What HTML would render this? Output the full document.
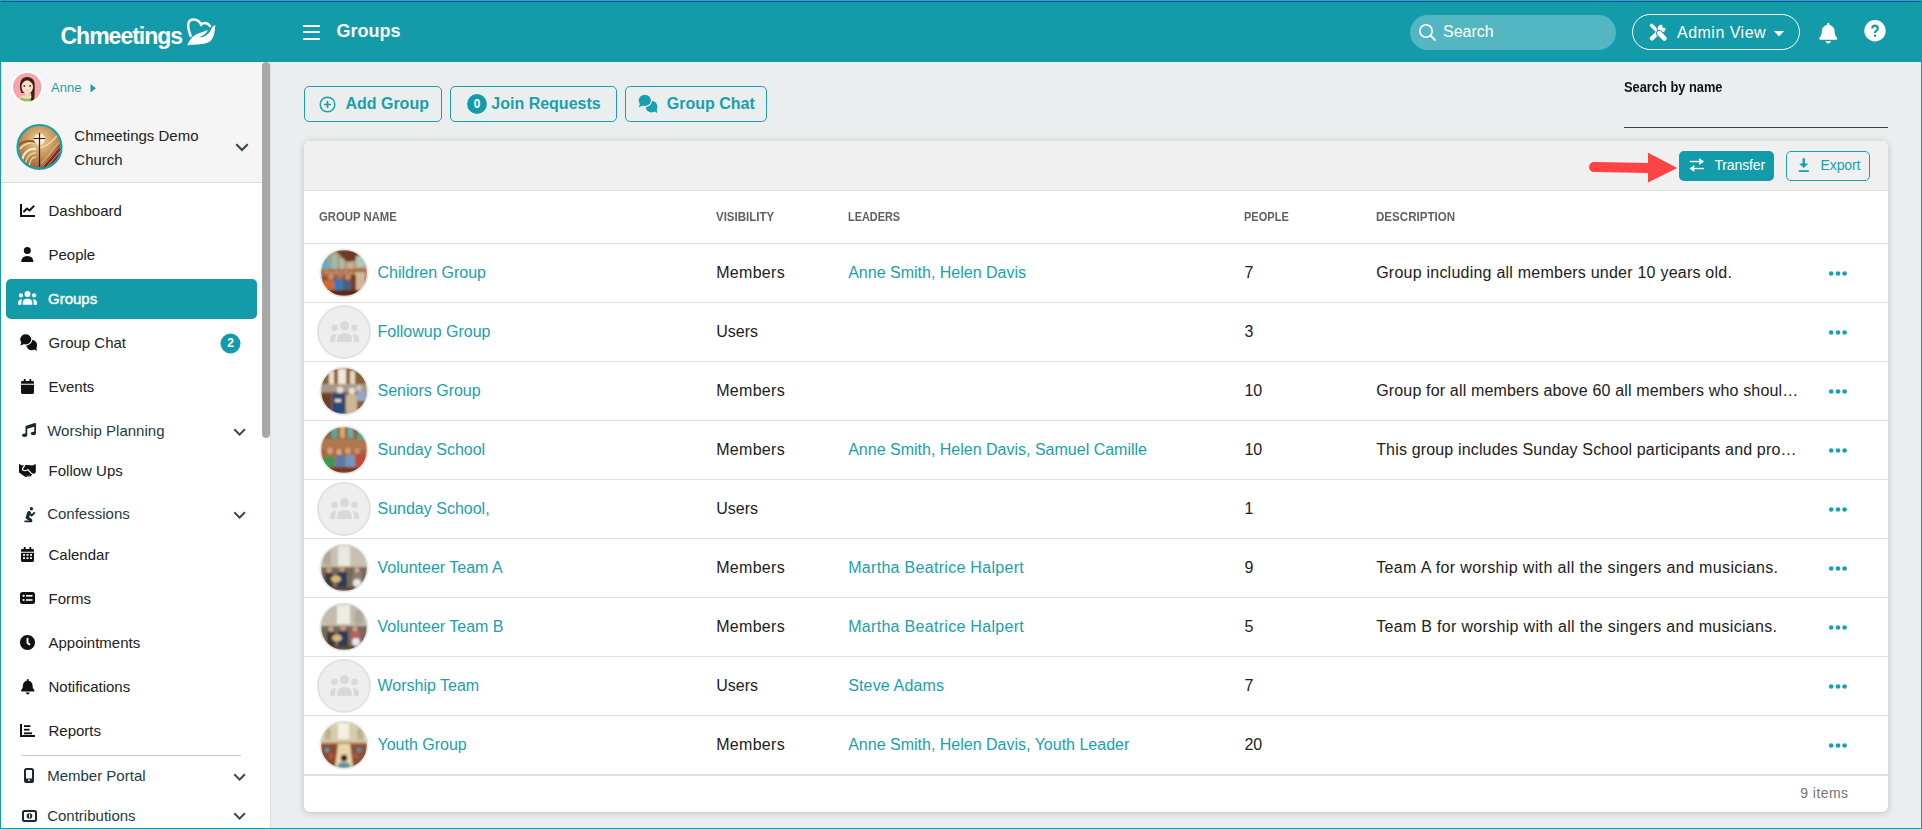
<!DOCTYPE html>
<html><head><meta charset="utf-8">
<style>
*{box-sizing:border-box;margin:0;padding:0}
html,body{width:1922px;height:829px;overflow:hidden}
body{position:relative;background:#149ba9;font-family:"Liberation Sans",sans-serif}
.abs{position:absolute}
.t{position:absolute;white-space:nowrap;line-height:1}
svg{overflow:visible}
</style></head><body>
<div class="abs" style="left:0px;top:0px;width:1922px;height:1px;background:#2aa9b4"></div>
<div class="abs" style="left:1px;top:1px;width:1920px;height:1px;background:#1651a0"></div>
<div class="abs" style="left:1px;top:2px;width:1920px;height:60px;background:#149ba9"></div>
<div class="t" style="left:60.5px;top:25.00px;font-size:23px;color:#fff;font-weight:bold;letter-spacing:-1px">Chmeetings</div>
<svg class="abs" style="left:185px;top:15px;" width="35" height="33" viewBox="0 0 35 33"><path d="M5.6 20.8 C3.6 15.5 2.6 10.5 3.6 7.6 C5.2 3.6 12.2 2.7 16.2 9.6 C18.2 7.6 23 7.2 25 11.2" fill="none" stroke="#fff" stroke-width="2.5" stroke-linecap="round"/><path d="M2.3 30.5 C4 26 7 21 12 19 C15.5 17.5 19.5 16.5 22.8 15 C21.5 18.5 18 21 14 22.3 C18 22.5 23 20.5 25.5 15.5 C27 12.5 28 10.5 30.3 10 C30 16 29 22 26 25.5 C22.5 29 16 29.3 11 29.6 C7.5 29.8 4.5 30 2.3 30.5 Z" fill="#fff"/></svg>
<div class="abs" style="left:303px;top:24.5px;width:17px;height:2.2px;background:#fff;border-radius:1px"></div>
<div class="abs" style="left:303px;top:31px;width:17px;height:2.2px;background:#fff;border-radius:1px"></div>
<div class="abs" style="left:303px;top:37.7px;width:17px;height:2.2px;background:#fff;border-radius:1px"></div>
<div class="t" style="left:336.5px;top:22.00px;font-size:18px;color:#fff;font-weight:bold;">Groups</div>
<div class="abs" style="left:1410px;top:15px;width:206px;height:35px;background:rgba(255,255,255,0.27);border-radius:18px"></div>
<svg class="abs" style="left:1418px;top:23px;" width="19" height="19" viewBox="0 0 19 19"><circle cx="8" cy="8" r="6.2" fill="none" stroke="#fff" stroke-width="1.6"/><line x1="12.5" y1="12.5" x2="17" y2="17" stroke="#fff" stroke-width="1.8" stroke-linecap="round"/></svg>
<div class="t" style="left:1443px;top:24.00px;font-size:16px;color:#fff;font-weight:normal;">Search</div>
<div class="abs" style="left:1632px;top:14px;width:168px;height:36px;border:1px solid #fff;border-radius:18px"></div>
<svg class="abs" style="left:1644px;top:18px;" width="28" height="28" viewBox="0 0 28 28"><line x1="7.5" y1="7.3" x2="13.5" y2="13.3" stroke="#fff" stroke-width="3.4" stroke-linecap="round"/><line x1="7.8" y1="20.6" x2="12.5" y2="15.9" stroke="#fff" stroke-width="4.2" stroke-linecap="round"/><circle cx="17.6" cy="10.6" r="4.4" fill="#fff" stroke="#149ba9" stroke-width="1"/><circle cx="20.3" cy="7.9" r="2.1" fill="#149ba9"/><path d="M19.5 5.5 L24 3.5 L24.5 9.5 Z" fill="#149ba9"/><line x1="15.3" y1="15.3" x2="20.4" y2="20.4" stroke="#149ba9" stroke-width="6.6" stroke-linecap="round"/><line x1="15.3" y1="15.3" x2="20.4" y2="20.4" stroke="#fff" stroke-width="4.8" stroke-linecap="round"/></svg>
<div class="t" style="left:1677px;top:25.00px;font-size:16px;color:#fff;font-weight:normal;letter-spacing:0.49px">Admin View</div>
<svg class="abs" style="left:1774px;top:31px;" width="10" height="6" viewBox="0 0 10 6"><path d="M0 0 L10 0 L5 5.5 Z" fill="#fff"/></svg>
<svg class="abs" style="left:1818.5px;top:23px;overflow:visible" width="18.5" height="20.5" viewBox="0 0 448 512"><path fill="#fff" d="M224 512c35.32 0 63.97-28.65 63.97-64H160.03c0 35.35 28.65 64 63.97 64zm215.39-149.71c-19.32-20.76-55.47-51.99-55.47-154.29 0-77.7-54.48-139.9-127.94-155.16V32c0-17.67-14.32-32-31.98-32s-31.98 14.330-31.98 32v20.84C118.56 68.1 64.08 130.3 64.08 208c0 102.3-36.15 133.53-55.47 154.29-6 6.45-8.66 14.16-8.61 21.71.11 16.4 12.98 32 32.1 32h383.8c19.12 0 32-15.6 32.1-32 .05-7.55-2.610-15.27-8.61-21.71z"/></svg>
<svg class="abs" style="left:1863.5px;top:20px;" width="22" height="22" viewBox="0 0 22 22"><circle cx="11" cy="10.8" r="10.7" fill="#fff"/><path d="M8.3 8.6 Q8.3 5.6 11 5.6 Q13.8 5.6 13.8 8.3 Q13.8 9.9 12.2 10.9 Q11 11.7 11 13" fill="none" stroke="#149ba9" stroke-width="2.2"/><rect x="9.9" y="14.6" width="2.2" height="2.2" fill="#149ba9"/></svg>
<div class="abs" style="left:1px;top:62px;width:269px;height:766px;background:#fff"></div>
<div class="abs" style="left:270px;top:62px;width:1px;height:766px;background:#dcdfe1"></div>
<div class="abs" style="left:271px;top:62px;width:1650px;height:766px;background:#eaeeef"></div>
<div class="abs" style="left:1px;top:62px;width:261px;height:120px;background:#f5f5f5"></div>
<div class="abs" style="left:1px;top:182px;width:261px;height:1px;background:#dadada"></div>
<div class="abs" style="left:262px;top:62px;width:8px;height:376px;background:#a8a8a8;border-radius:4px"></div>
<svg class="abs" style="left:8px;top:68px;" width="40" height="40" viewBox="0 0 40 40"><circle cx="19.2" cy="19.1" r="16.4" fill="#fff"/><circle cx="19.2" cy="19.1" r="14.2" fill="#f7a2ae"/><clipPath id="ca"><circle cx="19.2" cy="19.1" r="14.2"/></clipPath><g clip-path="url(#ca)"><path d="M8 36 Q9 28 19 27 Q29 28 30 36 Z" fill="#f8dcc4"/><path d="M9 36 Q10.5 30 14 29.5 Q19 32 24.5 29.5 Q28 30 29 36 Z" fill="#8cc455"/><path d="M12 21 Q11 9 19.3 9 Q27.5 9 26.8 20 L26.5 26 Q27 31 24.5 34 L22.5 33 Q24 28 23 25 L13.5 25 Z" fill="#3b2313"/><rect x="17" y="23" width="4.6" height="6" fill="#f5d4bb"/><ellipse cx="19.3" cy="18.8" rx="5.8" ry="7" fill="#f9dfc8"/><path d="M13.2 17 Q13.5 10.5 19.3 10.5 Q25 10.5 25.3 17 Q22 12.5 19.3 12.2 Q16 12.5 13.2 17 Z" fill="#3b2313"/><circle cx="16.3" cy="17.9" r="0.95" fill="#3a2a20"/><circle cx="22.2" cy="17.9" r="0.95" fill="#3a2a20"/><ellipse cx="19.3" cy="22.4" rx="0.8" ry="0.4" fill="#e09080"/></g></svg>
<div class="t" style="left:51px;top:81.00px;font-size:13px;color:#1a9fad;font-weight:normal;">Anne</div>
<svg class="abs" style="left:89.5px;top:83.5px;" width="7" height="9" viewBox="0 0 7 9"><path d="M0.5 0 L6 4.2 L0.5 8.5 Z" fill="#1a9fad"/></svg>
<svg class="abs" style="left:14px;top:122px;" width="52" height="52" viewBox="0 0 52 52"><defs><radialGradient id="cg" cx="0.5" cy="0.35" r="0.65"><stop offset="0" stop-color="#ecd3a0"/><stop offset="0.55" stop-color="#c89458"/><stop offset="1" stop-color="#9a6634"/></radialGradient><clipPath id="cc"><circle cx="25.5" cy="25" r="21"/></clipPath></defs><circle cx="25.5" cy="25" r="21.5" fill="url(#cg)"/><g clip-path="url(#cc)"><path d="M6 27 Q14 17 27 23" fill="none" stroke="#f2dfb4" stroke-width="1.6"/><path d="M7 48 Q7 26 22 27" fill="none" stroke="#f4e6c6" stroke-width="2.2"/><path d="M11 48 Q11 31 22 31" fill="none" stroke="#e8d0a0" stroke-width="1.6"/><path d="M15 48 Q15 35 22 35" fill="none" stroke="#f4e6c6" stroke-width="1.2"/><path d="M26 47 L47 21 L50 50 Z" fill="#7e2c20"/><path d="M27 42 L45 20 M28 45.5 L47 23 M31 47 L48 27 M34 48 L49 31" stroke="#e8c8a0" stroke-width="0.7"/><path d="M4 24 Q12 16 24 21" fill="none" stroke="#8a5a2e" stroke-width="2"/><path d="M26 26 Q38 22 44 12" fill="none" stroke="#f0dcb0" stroke-width="1.4"/></g><circle cx="25.5" cy="17" r="5.6" fill="#f6ebd2"/><line x1="25.5" y1="10.8" x2="25.5" y2="45" stroke="#2a1a10" stroke-width="1.2"/><line x1="19.8" y1="16.5" x2="31.2" y2="16.5" stroke="#2a1a10" stroke-width="1"/><circle cx="25.5" cy="25" r="22" fill="none" stroke="#1a9fad" stroke-width="2.2"/></svg>
<div class="t" style="left:74.3px;top:128.00px;font-size:15px;color:#212121;font-weight:normal;">Chmeetings Demo</div>
<div class="t" style="left:74.3px;top:152.00px;font-size:15px;color:#212121;font-weight:normal;">Church</div>
<svg class="abs" style="left:235px;top:143px;" width="14" height="9" viewBox="0 0 14 9"><path d="M1.3 1.3 L7 7 L12.7 1.3" fill="none" stroke="#37474f" stroke-width="2.2"/></svg>
<div class="abs" style="left:6px;top:279px;width:251px;height:40px;background:#149ba9;border-radius:5px"></div>
<div class="t" style="left:48.5px;top:203.00px;font-size:15px;color:#212121;font-weight:normal;">Dashboard</div>
<svg class="abs" style="left:20px;top:204px;" width="15" height="13" viewBox="0 0 15 13"><path d="M1 0 V12 H15" fill="none" stroke="#111" stroke-width="2"/><path d="M4 7.5 L7 4.5 L9.5 6.5 L13.8 2.2" fill="none" stroke="#111" stroke-width="1.9" stroke-linecap="round" stroke-linejoin="round"/></svg>
<div class="t" style="left:48.5px;top:247.00px;font-size:15px;color:#212121;font-weight:normal;">People</div>
<svg class="abs" style="left:20px;top:246px;" width="15" height="17" viewBox="0 0 15 17"><circle cx="7.3" cy="4.4" r="3.5" fill="#111"/><path d="M1.2 15.9 Q1.2 9.9 7.3 9.9 Q13.4 9.9 13.4 15.9 Z" fill="#111"/></svg>
<div class="t" style="left:48px;top:291.00px;font-size:15px;color:#fff;font-weight:normal;-webkit-text-stroke:0.45px #fff">Groups</div>
<svg class="abs" style="left:18px;top:290.6px;" width="18.995" height="13.755" viewBox="0 0 18.995 13.755"><g transform="scale(0.655)" fill="#fff"><circle cx="14.5" cy="4.7" r="4.6"/><circle cx="4.5" cy="6.7" r="3.2"/><circle cx="24.5" cy="6.7" r="3.2"/><path d="M7.2 21 V18 Q7.2 12 14.5 12 Q21.8 12 21.8 18 V21 Z"/><path d="M0 21 V18.5 Q0 13 6.3 12.7 Q5.2 14.8 5.2 18 V21 Z"/><path d="M29 21 V18.5 Q29 13 22.7 12.7 Q23.8 14.8 23.8 18 V21 Z"/></g></svg>
<div class="t" style="left:48.5px;top:335.00px;font-size:15px;color:#212121;font-weight:normal;">Group Chat</div>
<svg class="abs" style="left:15.5px;top:329.5px;" width="25.2" height="25.2" viewBox="0 0 25.2 25.2"><g transform="scale(0.9)"><circle cx="17.5" cy="16.6" r="5.9" fill="#111"/><path d="M19.5 20.5 L23.2 23.3 L22.6 17.8 Z" fill="#111"/><ellipse cx="10.8" cy="10.4" rx="7.3" ry="6.8" fill="#fff"/><ellipse cx="10.8" cy="10.4" rx="6.1" ry="5.6" fill="#111"/><path d="M6.2 13.2 L4.7 17.3 L9.2 15.5 Z" fill="#111"/></g></svg>
<svg class="abs" style="left:220px;top:332.5px;" width="21" height="21" viewBox="0 0 21 21"><circle cx="10.5" cy="10.5" r="10" fill="#149ba9"/><text x="10.5" y="13.5" text-anchor="middle" font-family="Liberation Sans" font-weight="bold" font-size="12" fill="#fff">2</text></svg>
<div class="t" style="left:48.5px;top:379.00px;font-size:15px;color:#212121;font-weight:normal;">Events</div>
<svg class="abs" style="left:21px;top:378.5px;" width="13" height="15" viewBox="0 0 448 512"><path fill="#111" d="M12 192h424c6.6 0 12 5.4 12 12v260c0 26.5-21.5 48-48 48H48c-26.5 0-48-21.5-48-48V204c0-6.6 5.4-12 12-12zm436-44v-36c0-26.5-21.5-48-48-48h-48V12c0-6.6-5.4-12-12-12h-40c-6.6 0-12 5.4-12 12v52H160V12c0-6.6-5.4-12-12-12h-40c-6.6 0-12 5.4-12 12v52H48C21.5 64 0 85.5 0 112v36c0 6.6 5.4 12 12 12h424c6.6 0 12-5.4 12-12z"/></svg>
<div class="t" style="left:47.2px;top:423.00px;font-size:15px;color:#1e3b44;font-weight:normal;">Worship Planning</div>
<svg class="abs" style="left:22px;top:423px;" width="14" height="14" viewBox="0 0 512 512"><path fill="#162a30" d="M470.38 1.51L150.41 96A32 32 0 0 0 128 126.51v261.41A139 139 0 0 0 96 384c-53 0-96 28.66-96 64s43 64 96 64 96-28.66 96-64V214.32l256-75v184.61a138.4 138.4 0 0 0-32-3.93c-53 0-96 28.66-96 64s43 64 96 64 96-28.65 96-64V32a32 32 0 0 0-41.62-30.49z"/></svg>
<svg class="abs" style="left:232.5px;top:427.5px;" width="14" height="9" viewBox="0 0 14 9"><path d="M1.3 1.3 L6.6 6.6 L11.9 1.3" fill="none" stroke="#37474f" stroke-width="2"/></svg>
<div class="t" style="left:48.6px;top:463.00px;font-size:15px;color:#212121;font-weight:normal;">Follow Ups</div>
<svg class="abs" style="left:16px;top:460px;" width="24" height="20" viewBox="0 0 24 20"><path fill="#111" d="M3 4 L6.5 5.6 L9 5 L12.5 5 L16.5 5.6 L19.8 4 L19.8 12.6 L17.6 13.9 L15.8 13 L16 14.8 L14.5 16.6 L9.5 16.9 L3 12.6 Z"/><path d="M8.8 5.2 L6.6 8.6 Q6.2 10 8 10.5 Q10 11 11.8 9.6 L15.6 13.6" fill="none" stroke="#fff" stroke-width="1.2" stroke-linecap="round"/><path d="M11 15.6 L11.6 16.9 M12.9 15.3 L13.5 16.6" stroke="#fff" stroke-width="0.7"/></svg>
<div class="t" style="left:47.2px;top:506.00px;font-size:15px;color:#1e3b44;font-weight:normal;">Confessions</div>
<svg class="abs" style="left:18px;top:502px;" width="24" height="24" viewBox="0 0 24 24"><g stroke="#162a30" stroke-linecap="round" stroke-linejoin="round" fill="none"><path d="M11 10.6 L9.3 15.5" stroke-width="3.3"/><path d="M11.5 10.8 L13.6 13.6 L16.3 11" stroke-width="1.9"/><path d="M9.3 15.6 L12.8 18.3" stroke-width="3"/><path d="M7.1 19.3 H13.4" stroke-width="1.8"/></g><circle cx="13.4" cy="6.8" r="1.7" fill="#162a30"/></svg>
<svg class="abs" style="left:232.5px;top:510.79999999999995px;" width="14" height="9" viewBox="0 0 14 9"><path d="M1.3 1.3 L6.6 6.6 L11.9 1.3" fill="none" stroke="#37474f" stroke-width="2"/></svg>
<div class="t" style="left:48.5px;top:547.00px;font-size:15px;color:#212121;font-weight:normal;">Calendar</div>
<svg class="abs" style="left:21px;top:546.5px;" width="13" height="15" viewBox="0 0 448 512"><path fill="#111" d="M12 192h424c6.6 0 12 5.4 12 12v260c0 26.5-21.5 48-48 48H48c-26.5 0-48-21.5-48-48V204c0-6.6 5.4-12 12-12zm436-44v-36c0-26.5-21.5-48-48-48h-48V12c0-6.6-5.4-12-12-12h-40c-6.6 0-12 5.4-12 12v52H160V12c0-6.6-5.4-12-12-12h-40c-6.6 0-12 5.4-12 12v52H48C21.5 64 0 85.5 0 112v36c0 6.6 5.4 12 12 12h424c6.6 0 12-5.4 12-12z"/><g fill="#fff"><rect x="70" y="240" width="70" height="60"/><rect x="190" y="240" width="70" height="60"/><rect x="310" y="240" width="70" height="60"/><rect x="70" y="350" width="70" height="60"/><rect x="190" y="350" width="70" height="60"/><rect x="310" y="350" width="70" height="60"/></g></svg>
<div class="t" style="left:48.5px;top:591.00px;font-size:15px;color:#212121;font-weight:normal;">Forms</div>
<svg class="abs" style="left:20px;top:591.5px;" width="15" height="12" viewBox="0 0 15 12"><rect x="0" y="0" width="15" height="12" rx="2.5" fill="#111"/><circle cx="3.6" cy="3.8" r="1.1" fill="#fff"/><circle cx="3.6" cy="8" r="1.1" fill="#fff"/><rect x="6" y="3" width="6.5" height="1.6" fill="#fff"/><rect x="6" y="7.2" width="6.5" height="1.6" fill="#fff"/></svg>
<div class="t" style="left:48.5px;top:635.00px;font-size:15px;color:#212121;font-weight:normal;">Appointments</div>
<svg class="abs" style="left:20px;top:634.5px;" width="15" height="15" viewBox="8 8 496 496"><path fill="#111" d="M256,8C119,8,8,119,8,256S119,504,256,504,504,393,504,256,393,8,256,8Zm92.49,313h0l-20,25a16,16,0,0,1-22.490,2.5h0l-67-49.72a40,40,0,0,1-15-31.23V112a16,16,0,0,1,16-16h32a16,16,0,0,1,16,16V256l58,42.5A16,16,0,0,1,348.49,321Z"/></svg>
<div class="t" style="left:48.5px;top:679.00px;font-size:15px;color:#212121;font-weight:normal;">Notifications</div>
<svg class="abs" style="left:20.5px;top:678.5px;" width="13.5" height="15.5" viewBox="0 0 448 512"><path fill="#111" d="M224 512c35.32 0 63.97-28.65 63.97-64H160.03c0 35.35 28.65 64 63.97 64zm215.39-149.71c-19.32-20.76-55.47-51.99-55.47-154.29 0-77.7-54.48-139.9-127.94-155.16V32c0-17.67-14.32-32-31.98-32s-31.98 14.33-31.98 32v20.84C118.56 68.1 64.08 130.3 64.08 208c0 102.3-36.15 133.53-55.47 154.29-6 6.45-8.66 14.16-8.61 21.71.11 16.4 12.98 32 32.1 32h383.8c19.12 0 32-15.6 32.1-32 .05-7.55-2.61-15.27-8.61-21.71z"/></svg>
<div class="t" style="left:48.5px;top:723.00px;font-size:15px;color:#212121;font-weight:normal;">Reports</div>
<svg class="abs" style="left:20px;top:724px;" width="15" height="13" viewBox="0 0 15 13"><path d="M1 0 V12 H15" fill="none" stroke="#111" stroke-width="2"/><rect x="4" y="1.2" width="6.5" height="1.8" fill="#111"/><rect x="4" y="4.8" width="5.5" height="1.8" fill="#111"/><rect x="4" y="8.4" width="8" height="1.8" fill="#111"/></svg>
<div class="abs" style="left:22px;top:755px;width:219px;height:1px;background:#b9cdd0"></div>
<div class="t" style="left:47.2px;top:768.00px;font-size:15px;color:#1e3b44;font-weight:normal;">Member Portal</div>
<svg class="abs" style="left:23.5px;top:768px;" width="10" height="15" viewBox="0 0 10 15"><rect x="1" y="1" width="8" height="13" rx="1.6" fill="none" stroke="#162a30" stroke-width="2"/><rect x="1" y="10.5" width="8" height="3.5" fill="#162a30"/><circle cx="5" cy="12.2" r="0.9" fill="#fff"/></svg>
<svg class="abs" style="left:232.5px;top:772.5px;" width="14" height="9" viewBox="0 0 14 9"><path d="M1.3 1.3 L6.6 6.6 L11.9 1.3" fill="none" stroke="#37474f" stroke-width="2"/></svg>
<div class="t" style="left:47.2px;top:808.00px;font-size:15px;color:#1e3b44;font-weight:normal;">Contributions</div>
<svg class="abs" style="left:22px;top:810px;" width="15" height="12" viewBox="0 0 15 12"><rect x="1" y="1" width="13" height="10" rx="1.5" fill="none" stroke="#162a30" stroke-width="2"/><circle cx="7.5" cy="6" r="2.8" fill="#162a30"/><rect x="7" y="4.3" width="1.1" height="3.4" fill="#fff"/></svg>
<svg class="abs" style="left:232.5px;top:812.1px;" width="14" height="9" viewBox="0 0 14 9"><path d="M1.3 1.3 L6.6 6.6 L11.9 1.3" fill="none" stroke="#37474f" stroke-width="2"/></svg>
<div class="abs" style="left:304px;top:86px;width:138px;height:36px;border:1px solid #1a9fad;border-radius:5px"></div>
<svg class="abs" style="left:318.5px;top:95.5px;" width="17" height="17" viewBox="0 0 17 17"><circle cx="8.5" cy="8.5" r="7.3" fill="none" stroke="#1a9fad" stroke-width="1.5"/><path d="M8.5 5 V12 M5 8.5 H12" stroke="#1a9fad" stroke-width="1.7"/></svg>
<div class="t" style="left:345.4px;top:96.00px;font-size:16px;color:#1a9fad;font-weight:bold;">Add Group</div>
<div class="abs" style="left:450px;top:86px;width:167px;height:36px;border:1px solid #1a9fad;border-radius:5px"></div>
<svg class="abs" style="left:467px;top:94px;" width="20" height="20" viewBox="0 0 20 20"><circle cx="10" cy="10" r="9.9" fill="#149ba9"/><text x="10" y="14.3" text-anchor="middle" font-family="Liberation Sans" font-weight="bold" font-size="12" fill="#fff">0</text></svg>
<div class="t" style="left:491.3px;top:96.00px;font-size:16px;color:#1a9fad;font-weight:bold;">Join Requests</div>
<div class="abs" style="left:625px;top:86px;width:142px;height:36px;border:1px solid #1a9fad;border-radius:5px"></div>
<svg class="abs" style="left:634px;top:90px;" width="28.0" height="28.0" viewBox="0 0 28.0 28.0"><g transform="scale(1.0)"><circle cx="17.5" cy="16.6" r="5.9" fill="#1a9fad"/><path d="M19.5 20.5 L23.2 23.3 L22.6 17.8 Z" fill="#1a9fad"/><ellipse cx="10.8" cy="10.4" rx="7.3" ry="6.8" fill="#eaeeef"/><ellipse cx="10.8" cy="10.4" rx="6.1" ry="5.6" fill="#1a9fad"/><path d="M6.2 13.2 L4.7 17.3 L9.2 15.5 Z" fill="#1a9fad"/></g></svg>
<div class="t" style="left:666.8px;top:96.00px;font-size:16px;color:#1a9fad;font-weight:bold;">Group Chat</div>
<div class="t" style="left:1624px;top:80.00px;font-size:14px;color:#111;font-weight:bold;transform:scaleX(0.917);transform-origin:0 0">Search by name</div>
<div class="abs" style="left:1624px;top:127px;width:264px;height:1px;background:#3c3c3c"></div>
<div class="abs" style="left:304px;top:141px;width:1584px;height:671px;background:#fff;border-radius:6px;box-shadow:0 1px 7px rgba(0,0,0,0.2)"></div>
<div class="abs" style="left:304px;top:141px;width:1584px;height:49px;background:#f0f0f0;border-radius:6px 6px 0 0"></div>
<div class="abs" style="left:304px;top:190px;width:1584px;height:1px;background:#dce0e6"></div>
<div class="abs" style="left:1679px;top:151px;width:95px;height:30px;background:#149ba9;border-radius:5px"></div>
<svg class="abs" style="left:1680px;top:150px;" width="30" height="30" viewBox="0 0 30 30"><rect x="9.8" y="10.85" width="10.5" height="1.35" fill="#fff"/><path d="M19.2 7.9 L24 11.5 L19.2 15.1 Z" fill="#fff"/><rect x="13.3" y="17.85" width="10.7" height="1.35" fill="#fff"/><path d="M14.3 14.9 L9.5 18.5 L14.3 22.1 Z" fill="#fff"/></svg>
<div class="t" style="left:1714.4px;top:158.00px;font-size:14px;color:#fff;font-weight:normal;letter-spacing:-0.13px">Transfer</div>
<div class="abs" style="left:1786px;top:151px;width:84px;height:30px;border:1px solid #1a9fad;border-radius:5px"></div>
<svg class="abs" style="left:1798px;top:158px;" width="11.5" height="14" viewBox="0 0 11.5 14"><path d="M5.75 1.2 V7" stroke="#1a9fad" stroke-width="2.4" stroke-linecap="round"/><path d="M1.2 5.6 L5.75 10 L10.3 5.6 Z" fill="#1a9fad"/><rect x="0.7" y="12.2" width="10.1" height="1.8" fill="#1a9fad"/></svg>
<div class="t" style="left:1820.5px;top:158.00px;font-size:14px;color:#1a9fad;font-weight:normal;letter-spacing:-0.1px">Export</div>
<svg class="abs" style="left:1585px;top:150px;" width="95" height="35" viewBox="0 0 95 35"><path d="M9 17 L64 18" stroke="#fd4343" stroke-width="10" stroke-linecap="round"/><path d="M63 2.7 L92.3 17.9 L63 32.5 Z" fill="#fd4343"/></svg>
<div class="t" style="left:319.3px;top:211.00px;font-size:12px;color:#616161;font-weight:bold;transform:scaleX(0.944);transform-origin:0 0">GROUP NAME</div>
<div class="t" style="left:716.2px;top:211.00px;font-size:12px;color:#616161;font-weight:bold;transform:scaleX(0.957);transform-origin:0 0">VISIBILITY</div>
<div class="t" style="left:848.2px;top:211.00px;font-size:12px;color:#616161;font-weight:bold;transform:scaleX(0.907);transform-origin:0 0">LEADERS</div>
<div class="t" style="left:1244.4px;top:211.00px;font-size:12px;color:#616161;font-weight:bold;transform:scaleX(0.919);transform-origin:0 0">PEOPLE</div>
<div class="t" style="left:1376.2px;top:211.00px;font-size:12px;color:#616161;font-weight:bold;transform:scaleX(0.966);transform-origin:0 0">DESCRIPTION</div>
<div class="abs" style="left:304px;top:243px;width:1584px;height:1px;background:#e0e0e0"></div>
<svg class="abs" style="left:319px;top:247.5px;" width="50" height="50" viewBox="0 0 50 50"><circle cx="25" cy="25" r="24.6" fill="#e4e4e4"/><clipPath id="cp1"><circle cx="23" cy="23" r="23"/></clipPath><filter id="fp1" x="-5%" y="-5%" width="110%" height="110%"><feGaussianBlur stdDeviation="0.85"/></filter><g clip-path="url(#cp1)" transform="translate(2,2)"><g filter="url(#fp1)"><rect x="0" y="0" width="46" height="46" fill="#8a5030"/><rect x="0" y="0" width="46" height="20" fill="#b89874"/><path d="M14 0 L46 0 L46 8 L26 12 Z" fill="#6a3a20"/><rect x="1" y="8" width="7" height="14" fill="#58b0c0"/><rect x="11" y="5" width="5" height="15" fill="#90c0b8"/><rect x="19" y="9" width="4" height="11" fill="#a8c0b0"/><rect x="35" y="6" width="9" height="11" fill="#b0c8b8"/><rect x="26" y="12" width="6" height="8" fill="#c8b090"/><rect x="0" y="19" width="46" height="8" fill="#a06848"/><g fill="#c88860"><circle cx="5" cy="22" r="2.2"/><circle cx="10" cy="23" r="2.2"/><circle cx="15" cy="22" r="2.2"/><circle cx="20" cy="23" r="2.2"/><circle cx="25" cy="22" r="2.2"/><circle cx="30" cy="23" r="2.2"/></g><rect x="34" y="22" width="10" height="22" fill="#d0b898"/><rect x="30" y="25" width="5" height="21" fill="#7a3a1a"/><circle cx="10" cy="27" r="2.8" fill="#d09070"/><circle cx="19" cy="26" r="2.8" fill="#b07858"/><circle cx="27" cy="27" r="2.6" fill="#d09070"/><rect x="2" y="30" width="11" height="12" rx="2" fill="#d06a28"/><rect x="13" y="29" width="9" height="13" rx="2" fill="#3a7ab0"/><rect x="22" y="30" width="8" height="12" rx="2" fill="#4a6080"/><rect x="0" y="40" width="46" height="6" fill="#5a2a12"/></g></g></svg>
<div class="t" style="left:377.5px;top:265.00px;font-size:16px;color:#1a9fad;font-weight:normal;">Children Group</div>
<div class="t" style="left:716.2px;top:265.00px;font-size:16px;color:#212121;font-weight:normal;letter-spacing:0.3px">Members</div>
<div class="t" style="left:848.2px;top:265.00px;font-size:16px;color:#1a9fad;font-weight:normal;letter-spacing:0px">Anne Smith, Helen Davis</div>
<div class="t" style="left:1244.4px;top:265.00px;font-size:16px;color:#212121;font-weight:normal;">7</div>
<div class="t" style="left:1376.2px;top:265.00px;font-size:16px;color:#212121;font-weight:normal;letter-spacing:0.23px">Group including all members under 10 years old.</div>
<svg class="abs" style="left:1828px;top:270.5px;" width="20" height="5" viewBox="0 0 20 5"><circle cx="3.2" cy="2.5" r="2.3" fill="#1a9fad"/><circle cx="10" cy="2.5" r="2.3" fill="#1a9fad"/><circle cx="16.6" cy="2.5" r="2.3" fill="#1a9fad"/></svg>
<div class="abs" style="left:304px;top:302px;width:1584px;height:1px;background:#e0e0e0"></div>
<svg class="abs" style="left:317px;top:304.5px;" width="54" height="54" viewBox="0 0 54 54"><circle cx="27" cy="27" r="26" fill="#eeeeee" stroke="#e2e2e2" stroke-width="2"/></svg>
<svg class="abs" style="left:330px;top:320.5px;" width="29.0" height="21.0" viewBox="0 0 29.0 21.0"><g transform="scale(1.0)" fill="#d9d9d9"><circle cx="14.5" cy="4.7" r="4.6"/><circle cx="4.5" cy="6.7" r="3.2"/><circle cx="24.5" cy="6.7" r="3.2"/><path d="M7.2 21 V18 Q7.2 12 14.5 12 Q21.8 12 21.8 18 V21 Z"/><path d="M0 21 V18.5 Q0 13 6.3 12.7 Q5.2 14.8 5.2 18 V21 Z"/><path d="M29 21 V18.5 Q29 13 22.7 12.7 Q23.8 14.8 23.8 18 V21 Z"/></g></svg>
<div class="t" style="left:377.5px;top:324.00px;font-size:16px;color:#1a9fad;font-weight:normal;">Followup Group</div>
<div class="t" style="left:716.2px;top:324.00px;font-size:16px;color:#212121;font-weight:normal;">Users</div>
<div class="t" style="left:1244.4px;top:324.00px;font-size:16px;color:#212121;font-weight:normal;">3</div>
<svg class="abs" style="left:1828px;top:329.5px;" width="20" height="5" viewBox="0 0 20 5"><circle cx="3.2" cy="2.5" r="2.3" fill="#1a9fad"/><circle cx="10" cy="2.5" r="2.3" fill="#1a9fad"/><circle cx="16.6" cy="2.5" r="2.3" fill="#1a9fad"/></svg>
<div class="abs" style="left:304px;top:361px;width:1584px;height:1px;background:#e0e0e0"></div>
<svg class="abs" style="left:319px;top:365.5px;" width="50" height="50" viewBox="0 0 50 50"><circle cx="25" cy="25" r="24.6" fill="#e4e4e4"/><clipPath id="cp2"><circle cx="23" cy="23" r="23"/></clipPath><filter id="fp2" x="-5%" y="-5%" width="110%" height="110%"><feGaussianBlur stdDeviation="0.85"/></filter><g clip-path="url(#cp2)" transform="translate(2,2)"><g filter="url(#fp2)"><rect x="0" y="0" width="46" height="46" fill="#8a5e36"/><rect x="8" y="3" width="5" height="13" fill="#e8e0c8"/><rect x="17" y="1" width="8" height="15" fill="#f0e8d8"/><rect x="29" y="3" width="5" height="13" fill="#e0d8c0"/><rect x="0" y="16" width="46" height="8" fill="#a89a88"/><circle cx="19" cy="22" r="3.2" fill="#e8e0d8"/><circle cx="31" cy="23" r="3.2" fill="#e8e0d8"/><circle cx="38" cy="20" r="2.8" fill="#d0c8c0"/><rect x="11" y="25" width="13" height="21" rx="3" fill="#2a4878"/><rect x="25" y="26" width="11" height="20" rx="3" fill="#c8b898"/><rect x="36" y="23" width="9" height="10" rx="2" fill="#90a8c8"/><rect x="14" y="31" width="6" height="3" fill="#e8d8c0"/><rect x="0" y="26" width="10" height="20" fill="#6a4020"/></g></g></svg>
<div class="t" style="left:377.5px;top:383.00px;font-size:16px;color:#1a9fad;font-weight:normal;">Seniors Group</div>
<div class="t" style="left:716.2px;top:383.00px;font-size:16px;color:#212121;font-weight:normal;letter-spacing:0.3px">Members</div>
<div class="t" style="left:1244.4px;top:383.00px;font-size:16px;color:#212121;font-weight:normal;">10</div>
<div class="t" style="left:1376.2px;top:383.00px;font-size:16px;color:#212121;font-weight:normal;letter-spacing:0.165px">Group for all members above 60 all members who shoul…</div>
<svg class="abs" style="left:1828px;top:388.5px;" width="20" height="5" viewBox="0 0 20 5"><circle cx="3.2" cy="2.5" r="2.3" fill="#1a9fad"/><circle cx="10" cy="2.5" r="2.3" fill="#1a9fad"/><circle cx="16.6" cy="2.5" r="2.3" fill="#1a9fad"/></svg>
<div class="abs" style="left:304px;top:420px;width:1584px;height:1px;background:#e0e0e0"></div>
<svg class="abs" style="left:319px;top:424.5px;" width="50" height="50" viewBox="0 0 50 50"><circle cx="25" cy="25" r="24.6" fill="#e4e4e4"/><clipPath id="cp3"><circle cx="23" cy="23" r="23"/></clipPath><filter id="fp3" x="-5%" y="-5%" width="110%" height="110%"><feGaussianBlur stdDeviation="0.85"/></filter><g clip-path="url(#cp3)" transform="translate(2,2)"><g filter="url(#fp3)"><rect x="0" y="0" width="46" height="46" fill="#a8683a"/><rect x="0" y="0" width="46" height="12" fill="#8a6a4a"/><rect x="11" y="1" width="5" height="10" fill="#58a8a0"/><rect x="19" y="0" width="5" height="11" fill="#d8a860"/><rect x="27" y="1" width="5" height="10" fill="#68b0a8"/><rect x="37" y="5" width="8" height="9" fill="#40b090"/><rect x="0" y="12" width="46" height="10" fill="#b07850"/><circle cx="9" cy="24" r="3" fill="#d8a080"/><circle cx="18" cy="25" r="3" fill="#d8a888"/><circle cx="27" cy="24" r="3" fill="#d8a080"/><circle cx="36" cy="24" r="3" fill="#c89070"/><rect x="3" y="29" width="11" height="13" rx="2" fill="#3a9858"/><rect x="15" y="28" width="9" height="16" rx="2" fill="#5a7aa8"/><rect x="25" y="28" width="9" height="16" rx="2" fill="#6a98c0"/><rect x="34" y="27" width="11" height="12" rx="2" fill="#c04a38"/><rect x="0" y="40" width="46" height="6" fill="#7a3a18"/></g></g></svg>
<div class="t" style="left:377.5px;top:442.00px;font-size:16px;color:#1a9fad;font-weight:normal;">Sunday School</div>
<div class="t" style="left:716.2px;top:442.00px;font-size:16px;color:#212121;font-weight:normal;letter-spacing:0.3px">Members</div>
<div class="t" style="left:848.2px;top:442.00px;font-size:16px;color:#1a9fad;font-weight:normal;letter-spacing:0px">Anne Smith, Helen Davis, Samuel Camille</div>
<div class="t" style="left:1244.4px;top:442.00px;font-size:16px;color:#212121;font-weight:normal;">10</div>
<div class="t" style="left:1376.2px;top:442.00px;font-size:16px;color:#212121;font-weight:normal;letter-spacing:0.157px">This group includes Sunday School participants and pro…</div>
<svg class="abs" style="left:1828px;top:447.5px;" width="20" height="5" viewBox="0 0 20 5"><circle cx="3.2" cy="2.5" r="2.3" fill="#1a9fad"/><circle cx="10" cy="2.5" r="2.3" fill="#1a9fad"/><circle cx="16.6" cy="2.5" r="2.3" fill="#1a9fad"/></svg>
<div class="abs" style="left:304px;top:479px;width:1584px;height:1px;background:#e0e0e0"></div>
<svg class="abs" style="left:317px;top:481.5px;" width="54" height="54" viewBox="0 0 54 54"><circle cx="27" cy="27" r="26" fill="#eeeeee" stroke="#e2e2e2" stroke-width="2"/></svg>
<svg class="abs" style="left:330px;top:497.5px;" width="29.0" height="21.0" viewBox="0 0 29.0 21.0"><g transform="scale(1.0)" fill="#d9d9d9"><circle cx="14.5" cy="4.7" r="4.6"/><circle cx="4.5" cy="6.7" r="3.2"/><circle cx="24.5" cy="6.7" r="3.2"/><path d="M7.2 21 V18 Q7.2 12 14.5 12 Q21.8 12 21.8 18 V21 Z"/><path d="M0 21 V18.5 Q0 13 6.3 12.7 Q5.2 14.8 5.2 18 V21 Z"/><path d="M29 21 V18.5 Q29 13 22.7 12.7 Q23.8 14.8 23.8 18 V21 Z"/></g></svg>
<div class="t" style="left:377.5px;top:501.00px;font-size:16px;color:#1a9fad;font-weight:normal;">Sunday School,</div>
<div class="t" style="left:716.2px;top:501.00px;font-size:16px;color:#212121;font-weight:normal;">Users</div>
<div class="t" style="left:1244.4px;top:501.00px;font-size:16px;color:#212121;font-weight:normal;">1</div>
<svg class="abs" style="left:1828px;top:506.5px;" width="20" height="5" viewBox="0 0 20 5"><circle cx="3.2" cy="2.5" r="2.3" fill="#1a9fad"/><circle cx="10" cy="2.5" r="2.3" fill="#1a9fad"/><circle cx="16.6" cy="2.5" r="2.3" fill="#1a9fad"/></svg>
<div class="abs" style="left:304px;top:538px;width:1584px;height:1px;background:#e0e0e0"></div>
<svg class="abs" style="left:319px;top:542.5px;" width="50" height="50" viewBox="0 0 50 50"><circle cx="25" cy="25" r="24.6" fill="#e4e4e4"/><clipPath id="cp4"><circle cx="23" cy="23" r="23"/></clipPath><filter id="fp4" x="-5%" y="-5%" width="110%" height="110%"><feGaussianBlur stdDeviation="0.85"/></filter><g clip-path="url(#cp4)" transform="translate(2,2)"><g filter="url(#fp4)"><rect x="0" y="0" width="46" height="46" fill="#9a8a78"/><rect x="0" y="0" width="46" height="22" fill="#c8c0b0"/><rect x="17" y="1" width="12" height="20" fill="#e8e8e0"/><rect x="2" y="6" width="8" height="14" fill="#b0a898"/><rect x="0" y="22" width="46" height="24" fill="#7a6a5a"/><circle cx="8" cy="25" r="2.6" fill="#c8a888"/><circle cx="21" cy="24" r="2.8" fill="#c89878"/><circle cx="36" cy="25" r="2.6" fill="#d0b090"/><rect x="4" y="28" width="8" height="14" fill="#3a3a3a"/><rect x="16" y="27" width="10" height="16" fill="#2a3a58"/><ellipse cx="15" cy="34" rx="5" ry="3.5" fill="#d8b878"/><rect x="32" y="28" width="9" height="10" fill="#8a8070"/><circle cx="36" cy="38" r="4" fill="#e8e8e8"/><rect x="0" y="42" width="46" height="4" fill="#5a4a3a"/></g></g></svg>
<div class="t" style="left:377.5px;top:560.00px;font-size:16px;color:#1a9fad;font-weight:normal;">Volunteer Team A</div>
<div class="t" style="left:716.2px;top:560.00px;font-size:16px;color:#212121;font-weight:normal;letter-spacing:0.3px">Members</div>
<div class="t" style="left:848.2px;top:560.00px;font-size:16px;color:#1a9fad;font-weight:normal;letter-spacing:0.3px">Martha Beatrice Halpert</div>
<div class="t" style="left:1244.4px;top:560.00px;font-size:16px;color:#212121;font-weight:normal;">9</div>
<div class="t" style="left:1376.2px;top:560.00px;font-size:16px;color:#212121;font-weight:normal;letter-spacing:0.366px">Team A for worship with all the singers and musicians.</div>
<svg class="abs" style="left:1828px;top:565.5px;" width="20" height="5" viewBox="0 0 20 5"><circle cx="3.2" cy="2.5" r="2.3" fill="#1a9fad"/><circle cx="10" cy="2.5" r="2.3" fill="#1a9fad"/><circle cx="16.6" cy="2.5" r="2.3" fill="#1a9fad"/></svg>
<div class="abs" style="left:304px;top:597px;width:1584px;height:1px;background:#e0e0e0"></div>
<svg class="abs" style="left:319px;top:601.5px;" width="50" height="50" viewBox="0 0 50 50"><circle cx="25" cy="25" r="24.6" fill="#e4e4e4"/><clipPath id="cp5"><circle cx="23" cy="23" r="23"/></clipPath><filter id="fp5" x="-5%" y="-5%" width="110%" height="110%"><feGaussianBlur stdDeviation="0.85"/></filter><g clip-path="url(#cp5)" transform="translate(2,2)"><g filter="url(#fp5)"><rect x="0" y="0" width="46" height="46" fill="#9a8a78"/><rect x="0" y="0" width="46" height="22" fill="#c4bcae"/><rect x="16" y="1" width="13" height="19" fill="#ecece4"/><rect x="34" y="6" width="8" height="14" fill="#b0a898"/><rect x="0" y="22" width="46" height="24" fill="#786858"/><circle cx="10" cy="25" r="2.6" fill="#c8a888"/><circle cx="22" cy="24" r="2.8" fill="#c89878"/><circle cx="34" cy="25" r="2.6" fill="#d0a080"/><rect x="6" y="28" width="8" height="14" fill="#3a3a3a"/><rect x="17" y="27" width="10" height="16" fill="#2a3a58"/><ellipse cx="16" cy="34" rx="5" ry="3.5" fill="#d8b878"/><rect x="30" y="28" width="9" height="10" fill="#b86060"/><circle cx="35" cy="38" r="4" fill="#e8e8e8"/><rect x="0" y="42" width="46" height="4" fill="#5a4a3a"/></g></g></svg>
<div class="t" style="left:377.5px;top:619.00px;font-size:16px;color:#1a9fad;font-weight:normal;">Volunteer Team B</div>
<div class="t" style="left:716.2px;top:619.00px;font-size:16px;color:#212121;font-weight:normal;letter-spacing:0.3px">Members</div>
<div class="t" style="left:848.2px;top:619.00px;font-size:16px;color:#1a9fad;font-weight:normal;letter-spacing:0.3px">Martha Beatrice Halpert</div>
<div class="t" style="left:1244.4px;top:619.00px;font-size:16px;color:#212121;font-weight:normal;">5</div>
<div class="t" style="left:1376.2px;top:619.00px;font-size:16px;color:#212121;font-weight:normal;letter-spacing:0.315px">Team B for worship with all the singers and musicians.</div>
<svg class="abs" style="left:1828px;top:624.5px;" width="20" height="5" viewBox="0 0 20 5"><circle cx="3.2" cy="2.5" r="2.3" fill="#1a9fad"/><circle cx="10" cy="2.5" r="2.3" fill="#1a9fad"/><circle cx="16.6" cy="2.5" r="2.3" fill="#1a9fad"/></svg>
<div class="abs" style="left:304px;top:656px;width:1584px;height:1px;background:#e0e0e0"></div>
<svg class="abs" style="left:317px;top:658.5px;" width="54" height="54" viewBox="0 0 54 54"><circle cx="27" cy="27" r="26" fill="#eeeeee" stroke="#e2e2e2" stroke-width="2"/></svg>
<svg class="abs" style="left:330px;top:674.5px;" width="29.0" height="21.0" viewBox="0 0 29.0 21.0"><g transform="scale(1.0)" fill="#d9d9d9"><circle cx="14.5" cy="4.7" r="4.6"/><circle cx="4.5" cy="6.7" r="3.2"/><circle cx="24.5" cy="6.7" r="3.2"/><path d="M7.2 21 V18 Q7.2 12 14.5 12 Q21.8 12 21.8 18 V21 Z"/><path d="M0 21 V18.5 Q0 13 6.3 12.7 Q5.2 14.8 5.2 18 V21 Z"/><path d="M29 21 V18.5 Q29 13 22.7 12.7 Q23.8 14.8 23.8 18 V21 Z"/></g></svg>
<div class="t" style="left:377.5px;top:678.00px;font-size:16px;color:#1a9fad;font-weight:normal;">Worship Team</div>
<div class="t" style="left:716.2px;top:678.00px;font-size:16px;color:#212121;font-weight:normal;">Users</div>
<div class="t" style="left:848.2px;top:678.00px;font-size:16px;color:#1a9fad;font-weight:normal;letter-spacing:0.15px">Steve Adams</div>
<div class="t" style="left:1244.4px;top:678.00px;font-size:16px;color:#212121;font-weight:normal;">7</div>
<svg class="abs" style="left:1828px;top:683.5px;" width="20" height="5" viewBox="0 0 20 5"><circle cx="3.2" cy="2.5" r="2.3" fill="#1a9fad"/><circle cx="10" cy="2.5" r="2.3" fill="#1a9fad"/><circle cx="16.6" cy="2.5" r="2.3" fill="#1a9fad"/></svg>
<div class="abs" style="left:304px;top:715px;width:1584px;height:1px;background:#e0e0e0"></div>
<svg class="abs" style="left:319px;top:719.5px;" width="50" height="50" viewBox="0 0 50 50"><circle cx="25" cy="25" r="24.6" fill="#e4e4e4"/><clipPath id="cp6"><circle cx="23" cy="23" r="23"/></clipPath><filter id="fp6" x="-5%" y="-5%" width="110%" height="110%"><feGaussianBlur stdDeviation="0.85"/></filter><g clip-path="url(#cp6)" transform="translate(2,2)"><g filter="url(#fp6)"><rect x="0" y="0" width="46" height="46" fill="#b89870"/><rect x="0" y="0" width="46" height="20" fill="#d8ccb0"/><rect x="17" y="1" width="11" height="16" fill="#f4f0e0"/><rect x="4" y="6" width="6" height="12" fill="#c0b090"/><rect x="36" y="6" width="6" height="12" fill="#c0b090"/><path d="M0 22 L17 22 L14 46 L0 46 Z" fill="#8a4a30"/><path d="M29 22 L46 22 L46 46 L32 46 Z" fill="#8a5038"/><path d="M17 22 L29 22 L32 46 L14 46 Z" fill="#e8d4a8"/><circle cx="6" cy="28" r="2.5" fill="#5a9a98"/><circle cx="10" cy="34" r="2.5" fill="#c05040"/><circle cx="38" cy="28" r="2.5" fill="#5a8a98"/><circle cx="35" cy="34" r="2.5" fill="#c05040"/><circle cx="23" cy="36" r="3.2" fill="#2a2018"/><path d="M16 46 Q17 40 23 40 Q29 40 30 46 Z" fill="#5a98a0"/></g></g></svg>
<div class="t" style="left:377.5px;top:737.00px;font-size:16px;color:#1a9fad;font-weight:normal;">Youth Group</div>
<div class="t" style="left:716.2px;top:737.00px;font-size:16px;color:#212121;font-weight:normal;letter-spacing:0.3px">Members</div>
<div class="t" style="left:848.2px;top:737.00px;font-size:16px;color:#1a9fad;font-weight:normal;letter-spacing:0px">Anne Smith, Helen Davis, Youth Leader</div>
<div class="t" style="left:1244.4px;top:737.00px;font-size:16px;color:#212121;font-weight:normal;">20</div>
<svg class="abs" style="left:1828px;top:742.5px;" width="20" height="5" viewBox="0 0 20 5"><circle cx="3.2" cy="2.5" r="2.3" fill="#1a9fad"/><circle cx="10" cy="2.5" r="2.3" fill="#1a9fad"/><circle cx="16.6" cy="2.5" r="2.3" fill="#1a9fad"/></svg>
<div class="abs" style="left:304px;top:774px;width:1584px;height:2px;background:#e0e0e0"></div>
<div class="t" style="left:1800.3px;top:786.00px;font-size:14px;color:#757575;font-weight:normal;letter-spacing:0.45px">9 items</div>
</body></html>
